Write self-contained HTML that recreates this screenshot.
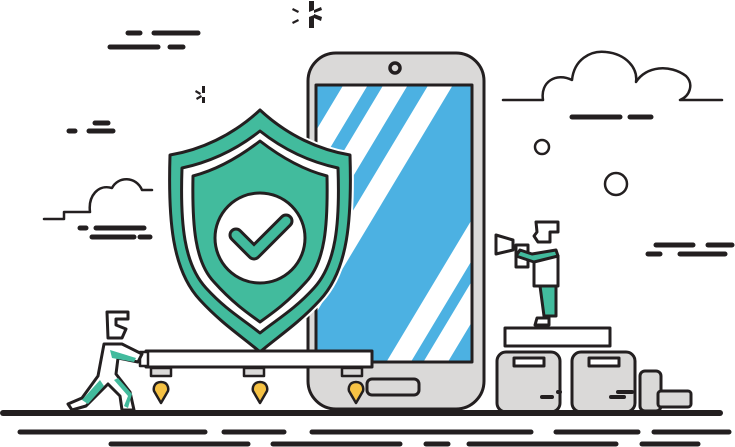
<!DOCTYPE html>
<html><head><style>html,body{margin:0;padding:0;background:#fff;width:735px;height:447px;overflow:hidden}</style></head>
<body>
<svg width="735" height="447" viewBox="0 0 735 447" xmlns="http://www.w3.org/2000/svg" stroke-linecap="round" stroke-linejoin="round">
<defs><clipPath id="scr"><rect x="316" y="85" width="156" height="277"/></clipPath></defs>
<g stroke="#231f20" stroke-width="5" fill="none">
<line x1="128" y1="33" x2="140" y2="33"/><line x1="154" y1="33" x2="198" y2="33"/>
<line x1="110" y1="47" x2="158" y2="47"/><line x1="170" y1="47" x2="183" y2="47"/>
<line x1="95" y1="123" x2="108" y2="123"/><line x1="69" y1="131" x2="75" y2="131"/><line x1="89" y1="131" x2="113" y2="131"/>
<line x1="80" y1="228" x2="86" y2="228"/><line x1="96" y1="228" x2="144" y2="228"/>
<line x1="92" y1="237" x2="134" y2="237"/><line x1="140" y1="237" x2="150" y2="237"/>
<line x1="572" y1="117" x2="620" y2="117"/><line x1="630" y1="117" x2="651" y2="117"/>
<line x1="656" y1="245" x2="693" y2="245"/><line x1="708" y1="245" x2="732" y2="245"/>
<line x1="648" y1="254" x2="660" y2="254"/><line x1="680" y1="254" x2="725" y2="254"/>
</g>
<g stroke="#231f20" stroke-width="2.5" fill="none">
<path d="M44 219 H64 V212 H90 C88 196 98 184 112 188 C118 176 136 176 142 190 L152 190"/>
<path d="M503 100 H543 C540 82 556 72 572 80 C574 60 590 50 606 52 C626 54 638 68 636 82 C646 66 670 64 686 76 C694 84 690 96 680 100 H722"/>
<circle cx="542" cy="147" r="7"/><circle cx="616" cy="184" r="11"/>
</g>
<g fill="#231f20">
<path d="M309 1 h5 v9 l-5 2z"/><path d="M309 17 l5 -2 v13 h-5z"/><path d="M314 14 l8 3 -1 4 -7 -3z"/><path d="M314 10 l7 -3 1 3 -8 3z"/>
<path d="M293 8 l6 3 -1 2 -6 -3z"/><path d="M292 22 l6 -3 1 2 -6 3z"/>
<path d="M196 90 l5 3 -1 2 -5 -3z M196 98 l5 -3 1 2 -5 3z M202 86 h3 v7 h-3z M202 97 h3 v6 h-3z"/>
</g>
<rect x="308" y="53" width="176" height="356" rx="28" fill="#dad9d8" stroke="#231f20" stroke-width="3"/>
<rect x="316" y="85" width="156" height="277" fill="#4cb1e2"/>
<g clip-path="url(#scr)" stroke="#fff" stroke-width="21" stroke-linecap="butt">
<line x1="415" y1="-14" x2="235" y2="286"/>
<line x1="455" y1="-14" x2="275" y2="286"/>
<line x1="500" y1="-14" x2="290" y2="336"/>
<line x1="491" y1="208" x2="371" y2="408"/>
<line x1="528" y1="208" x2="408" y2="408"/>
</g>
<rect x="316" y="85" width="156" height="277" fill="none" stroke="#231f20" stroke-width="3"/>
<circle cx="395" cy="68" r="5" fill="none" stroke="#231f20" stroke-width="3.5"/>
<rect x="367" y="379" width="52" height="16" rx="5" fill="none" stroke="#231f20" stroke-width="3"/>
<path d="M260 110 C232 136 200 150 170 155 C168 220 172 270 200 300 C222 324 244 338 260 352 C276 338 298 324 320 300 C348 270 352 220 350 155 C320 150 288 136 260 110Z" fill="#42bb9d" stroke="#fff" stroke-width="7"/>
<path d="M260 110 C232 136 200 150 170 155 C168 220 172 270 200 300 C222 324 244 338 260 352 C276 338 298 324 320 300 C348 270 352 220 350 155 C320 150 288 136 260 110Z" fill="#42bb9d" stroke="#231f20" stroke-width="3"/>
<path d="M260 131 C236 150 210 162 182 168 C180 224 184 264 206 288 C226 310 244 320 260 333 C276 320 294 310 314 288 C336 264 340 224 338 168 C310 162 284 150 260 131Z" fill="#fff" stroke="#231f20" stroke-width="3"/>
<path d="M260 141 C238 158 216 170 193 176 C192 226 195 262 214 282 C232 302 246 312 260 322 C274 312 288 302 306 282 C325 262 328 226 327 176 C304 170 282 158 260 141Z" fill="#42bb9d" stroke="#231f20" stroke-width="3"/>
<circle cx="260" cy="238" r="45" fill="#fff" stroke="#231f20" stroke-width="3"/>
<path d="M236 235 L254 253 L286 221" fill="none" stroke="#231f20" stroke-width="15"/>
<path d="M236 235 L254 253 L286 221" fill="none" stroke="#42bb9d" stroke-width="9"/>
<rect x="146" y="351" width="226" height="16" fill="#fff" stroke="#231f20" stroke-width="3"/>
<rect x="140" y="352" width="8" height="14" fill="#fff" stroke="#231f20" stroke-width="2.5"/>
<g fill="#dad9d8" stroke="#231f20" stroke-width="2.5">
<rect x="151" y="368" width="20" height="8"/><rect x="244" y="368" width="20" height="8"/><rect x="342" y="368" width="20" height="8"/>
</g>
<g fill="#f6c244" stroke="#231f20" stroke-width="2.5">
<path d="M161 382 c-6 0 -8 5 -7 9 l7 12 l7 -12 c1 -4 -1 -9 -7 -9z"/>
<path d="M260 382 c-6 0 -8 5 -7 9 l7 12 l7 -12 c1 -4 -1 -9 -7 -9z"/>
<path d="M356 382 c-6 0 -8 5 -7 9 l7 12 l7 -12 c1 -4 -1 -9 -7 -9z"/>
</g>
<g stroke="#231f20" stroke-width="3" fill="none">
<path d="M107 312 h21 v7 h-12 v6 l10 4 -4 9 h-14 z" fill="#fff"/>
<path d="M104 344 L98 376 L82 398 L68 404 L72 410 L86 406 L108 384 L120 396 L122 410 L134 410 L130 392 L116 374 L118 358 L138 362 L142 354 L122 344 Z" fill="#fff"/>
</g>
<g fill="#42bb9d"><path d="M110 350 L136 358 L134 362 L112 358Z"/><path d="M100 380 L82 400 L88 404 L104 386Z"/><path d="M114 380 L128 396 L124 406 L128 408 L132 394 L118 378Z"/></g>
<g stroke="#231f20" stroke-width="3" fill="none">
<path d="M536 222 h22 v10 h-8 v10 h-12 l-4 -6 3 -4 z" fill="#fff"/>
<path d="M496 235 L513 240 L513 250 L496 254 Z" fill="#fff"/>
<rect x="516" y="245" width="12" height="22" fill="#fff"/>
<path d="M534 254 L558 256 L558 286 L534 286 Z" fill="#fff"/>
<path d="M540 286 L556 286 L556 316 L544 316 Z" fill="#42bb9d"/>
<path d="M516 256 L534 262 L558 256 L556 250 L532 254 L520 250 Z" fill="#42bb9d"/>
<path d="M537 318 h12 v7 h-14z" fill="#fff"/>
<rect x="505" y="328" width="105" height="18" fill="#fff"/>
<rect x="497" y="352" width="63" height="60" rx="9" fill="#dad9d8"/>
<rect x="572" y="352" width="63" height="60" rx="9" fill="#dad9d8"/>
<rect x="514" y="358" width="30" height="8" fill="#fff"/>
<rect x="589" y="358" width="30" height="8" fill="#fff"/>
<rect x="640" y="371" width="21" height="40" rx="5" fill="#dad9d8"/>
<rect x="658" y="391" width="33" height="16" rx="3" fill="#dad9d8"/>
</g>
<g stroke="#231f20" stroke-width="4"><line x1="542" y1="397" x2="552" y2="397"/><line x1="558" y1="392" x2="560" y2="392"/><line x1="611" y1="397" x2="624" y2="397"/><line x1="618" y1="392" x2="632" y2="392"/></g>
<g stroke="#231f20" fill="none">
<line x1="3" y1="413" x2="720" y2="413" stroke-width="6"/>
<g stroke-width="5">
<line x1="20" y1="432" x2="205" y2="432"/><line x1="224" y1="432" x2="284" y2="432"/><line x1="312" y1="432" x2="531" y2="432"/><line x1="556" y1="432" x2="638" y2="432"/><line x1="654" y1="432" x2="729" y2="432"/>
<line x1="111" y1="444" x2="248" y2="444"/><line x1="273" y1="444" x2="400" y2="444"/><line x1="426" y1="444" x2="448" y2="444"/><line x1="469" y1="444" x2="616" y2="444"/><line x1="642" y1="444" x2="698" y2="444"/>
</g></g>
</svg>
</body></html>
